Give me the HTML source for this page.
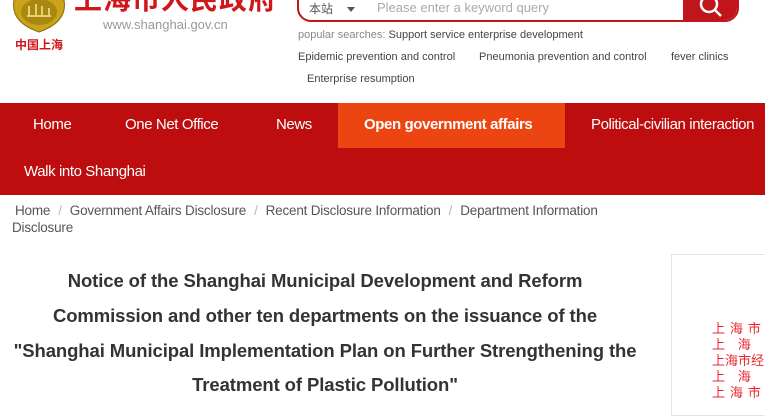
<!DOCTYPE html>
<html><head><meta charset="utf-8"><style>
body{margin:0;width:765px;height:400px;overflow:hidden;background:#fff;font-family:"Liberation Sans","Noto Sans CJK SC",sans-serif;position:relative}
.a{position:absolute;white-space:nowrap}
.nav{position:absolute;left:0;top:103px;width:765px;height:92px;background:#bd0d0e}
.nav span{position:absolute;color:#fff;font-size:15px;top:13px;letter-spacing:-0.4px}
.bc{color:#555;font-size:13.5px;letter-spacing:-0.2px}
.bc i{font-style:normal;color:#bbb;margin:0 8px}
.t{left:0;width:650px;text-align:center;font-weight:bold;font-size:18.5px;color:#333;letter-spacing:-0.1px}
.r{color:#e8262c;font-size:13px;font-family:"Noto Sans CJK SC",sans-serif;left:712px;letter-spacing:1px;line-height:16px}
</style></head><body>
<svg class="a" style="left:10px;top:-12px" width="58" height="46"><path d="M29 2 L54 12 Q58 34 29 44 Q0 34 4 12Z" fill="#c9a418" stroke="#8a6d0a"/><ellipse cx="29" cy="24" rx="18" ry="13" fill="#a88810"/><path d="M17 28h24M19 18v10M26 16v12M32 18v10M39 20v8" stroke="#e8d070" stroke-width="2"/></svg>
<div class="a" style="left:15px;top:36px;font-size:12px;font-weight:bold;color:#d0161b;font-family:'Noto Sans CJK SC',sans-serif">中国上海</div>
<div class="a" style="left:74px;top:-22px;font-size:28px;font-weight:bold;color:#d0161b;font-family:'Noto Sans CJK SC',sans-serif;letter-spacing:1px">上海市人民政府</div>
<div class="a" style="left:103px;top:17px;font-size:13px;color:#999">www.shanghai.gov.cn</div>
<div class="a" style="left:297px;top:-20px;width:438px;height:38px;border:2px solid #c0161b;border-radius:14px;overflow:hidden">
<div class="a" style="left:10px;top:18px;font-size:12px;color:#555">本站</div>
<div class="a" style="left:48px;top:25px;border:4px solid transparent;border-top:5px solid #555"></div>
<div class="a" style="left:78px;top:18px;font-size:13px;color:#aaa">Please enter a keyword query</div>
<div class="a" style="left:384px;top:0;width:56px;height:40px;background:#c0161b"></div>
<svg class="a" style="left:398px;top:14px" width="28" height="24"><circle cx="12" cy="8" r="8" fill="none" stroke="#fff" stroke-width="2.5"/><path d="M18 14l6 6" stroke="#fff" stroke-width="2.5"/></svg>
</div>
<div class="a" style="left:298px;top:29px;font-size:11px;color:#444"><span style="color:#888">popular searches:</span> Support service enterprise development</div>
<div class="a" style="left:298px;top:51px;font-size:11px;color:#444">Epidemic prevention and control</div>
<div class="a" style="left:479px;top:51px;font-size:11px;color:#444">Pneumonia prevention and control</div>
<div class="a" style="left:671px;top:51px;font-size:11px;color:#444">fever clinics</div>
<div class="a" style="left:307px;top:73px;font-size:11px;color:#444">Enterprise resumption</div>
<div class="nav">
<div class="a" style="left:338px;top:0;width:227px;height:45px;background:#ec4511"></div>
<span style="left:33px">Home</span><span style="left:125px">One Net Office</span><span style="left:276px">News</span>
<span style="left:364px;font-weight:bold">Open government affairs</span><span style="left:591px">Political-civilian interaction</span>
<span style="left:24px;top:60px">Walk into Shanghai</span>
</div>
<div class="a bc" style="left:15px;top:203px">Home<i>/</i>Government Affairs Disclosure<i>/</i>Recent Disclosure Information<i>/</i>Department Information</div>
<div class="a bc" style="left:12px;top:220px">Disclosure</div>
<div class="a t" style="top:270px">Notice of the Shanghai Municipal Development and Reform</div>
<div class="a t" style="top:305px">Commission and other ten departments on the issuance of the</div>
<div class="a t" style="top:340px">"Shanghai Municipal Implementation Plan on Further Strengthening the</div>
<div class="a t" style="top:374px">Treatment of Plastic Pollution"</div>
<div class="a" style="left:671px;top:254px;width:100px;height:160px;border:1px solid #e5e5e5"></div>
<div class="a r" style="top:320px">上 海 市</div>
<div class="a r" style="top:336px">上&nbsp;&nbsp;&nbsp;海</div>
<div class="a r" style="top:352px;letter-spacing:0">上海市经</div>
<div class="a r" style="top:368px">上&nbsp;&nbsp;&nbsp;海</div>
<div class="a r" style="top:384px">上 海 市</div>
</body></html>
